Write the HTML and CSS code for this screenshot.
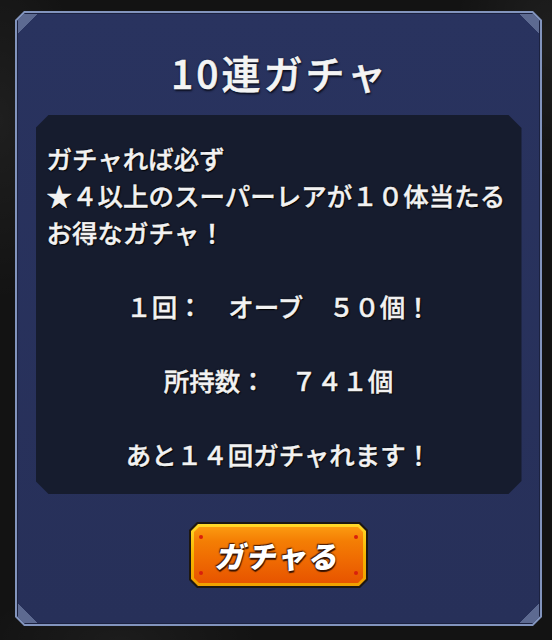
FILE: index.html
```html
<!DOCTYPE html>
<html lang="ja">
<head>
<meta charset="utf-8">
<title>10連ガチャ</title>
<link rel="stylesheet" href="styles.css">
</head>
<body>
<div class="panel">
  <div class="panel-inner">
    <h1 class="title">10連ガチャ</h1>
    <div class="info">
      <p class="line">ガチャれば必ず</p>
      <p class="line">★４以上のスーパーレアが１０体当たる</p>
      <p class="line">お得なガチャ！</p>
      <p class="line blank">&nbsp;</p>
      <p class="line center">１回：　オーブ　５０個！</p>
      <p class="line blank">&nbsp;</p>
      <p class="line center">所持数：　７４１個</p>
      <p class="line blank">&nbsp;</p>
      <p class="line center">あと１４回ガチャれます！</p>
    </div>
    <div class="btn">
      <div class="btn-rim">
        <div class="btn-face">
          <span class="dot tl"></span><span class="dot tr"></span><span class="dot bl"></span><span class="dot br"></span>
          <span class="btn-label">ガチャる</span>
        </div>
      </div>
    </div>
  </div>
</div>
</body>
</html>
```
FILE: styles.css
```css
html, body {
  margin: 0;
  padding: 0;
}
body {
  width: 552px;
  height: 640px;
  overflow: hidden;
  background:
    radial-gradient(ellipse 120px 260px at 0px 120px, rgba(255,255,255,0.05), transparent 70%),
    radial-gradient(ellipse 140px 200px at 552px 40px, rgba(255,255,255,0.05), transparent 70%),
    radial-gradient(ellipse 200px 80px at 120px 640px, rgba(255,255,255,0.04), transparent 70%),
    #131313;
  font-family: "Noto Sans CJK JP", "Noto Sans", sans-serif;
  padding-top: 11px;
  box-sizing: border-box;
}
.panel {
  margin-left: 15px;
  width: 527px;
  height: 615px;
  box-sizing: border-box;
  padding: 2px;
  background: #8294bd;
  clip-path: polygon(9px 0, calc(100% - 9px) 0, 100% 9px, 100% calc(100% - 9px), calc(100% - 9px) 100%, 9px 100%, 0 calc(100% - 9px), 0 9px);
}
.panel-inner {
  height: 100%;
  box-sizing: border-box;
  padding-top: 36px;
  display: flex;
  flex-direction: column;
  align-items: center;
  clip-path: polygon(8px 0, calc(100% - 8px) 0, 100% 8px, 100% calc(100% - 8px), calc(100% - 8px) 100%, 8px 100%, 0 calc(100% - 8px), 0 8px);
  background:
    linear-gradient(135deg, #5d6a91 0 15px, transparent 15px) top left / 24px 24px no-repeat,
    linear-gradient(225deg, #5d6a91 0 15px, transparent 15px) top right / 24px 24px no-repeat,
    linear-gradient(45deg, #5d6a91 0 15px, transparent 15px) bottom left / 24px 24px no-repeat,
    linear-gradient(315deg, #5d6a91 0 15px, transparent 15px) bottom right / 24px 24px no-repeat,
    linear-gradient(#29335f, #273059);
  box-shadow: inset 0 0 0 1px #1c2240;
}
.title {
  margin: 0;
  height: 46px;
  line-height: 46px;
  font-size: 39px;
  font-weight: 500;
  color: #f4f4f4;
  -webkit-text-stroke: 0.6px #f4f4f4;
  text-shadow: 0 0 2px #0c1020, 1px 2px 2px #0c1020;
  letter-spacing: 3px;
  padding-left: 3px;
}
.info {
  margin-top: 20px;
  width: 486px;
  height: 379px;
  box-sizing: border-box;
  padding: 24px 0 0 11px;
  background: #161c2e;
  clip-path: polygon(13px 0, calc(100% - 13px) 0, 100% 13px, 100% calc(100% - 13px), calc(100% - 13px) 100%, 13px 100%, 0 calc(100% - 13px), 0 13px);
}
.line {
  margin: 0;
  height: 37px;
  line-height: 37px;
  font-size: 25.5px;
  font-weight: 500;
  color: #f2f2f2;
  -webkit-text-stroke: 0.4px #f2f2f2;
  white-space: nowrap;
  text-shadow: 0 0 2px #000, 1px 1px 1px #000;
}
.line.center {
  text-align: center;
  margin-left: -11px;
}
.btn {
  margin-top: 28px;
  width: 179px;
  height: 66px;
  box-sizing: border-box;
  padding: 2px;
  background: #1d1712;
  clip-path: polygon(8px 0, calc(100% - 8px) 0, 100% 8px, 100% calc(100% - 8px), calc(100% - 8px) 100%, 8px 100%, 0 calc(100% - 8px), 0 8px);
}
.btn-rim {
  height: 100%;
  box-sizing: border-box;
  padding: 3px 3px 3px 3px;
  background: linear-gradient(#ffd92a, #f7b400 50%, #f0a000);
  clip-path: polygon(7px 0, calc(100% - 7px) 0, 100% 7px, 100% calc(100% - 7px), calc(100% - 7px) 100%, 7px 100%, 0 calc(100% - 7px), 0 7px);
}
.btn-face {
  position: relative;
  height: 100%;
  display: flex;
  align-items: center;
  justify-content: center;
  background: linear-gradient(#fb9a10, #f47e04 25%, #ef6a02 60%, #e75400);
  clip-path: polygon(5px 0, calc(100% - 5px) 0, 100% 5px, 100% calc(100% - 5px), calc(100% - 5px) 100%, 5px 100%, 0 calc(100% - 5px), 0 5px);
}
.dot {
  position: absolute;
  width: 4px;
  height: 4px;
  border-radius: 50%;
  background: #d8200c;
}
.dot.tl { left: 5px; top: 8px; }
.dot.tr { right: 5px; top: 8px; }
.dot.bl { left: 5px; bottom: 8px; }
.dot.br { right: 5px; bottom: 8px; }
.btn-label {
  display: inline-block;
  font-size: 30px;
  font-weight: 900;
  color: #ffffff;
  letter-spacing: 1px;
  transform: skewX(-12deg);
  text-shadow: 0 0 2px #2a0e00, 1px 2px 1px #3a1400, -1px -1px 1px #5a2000;
}
```
